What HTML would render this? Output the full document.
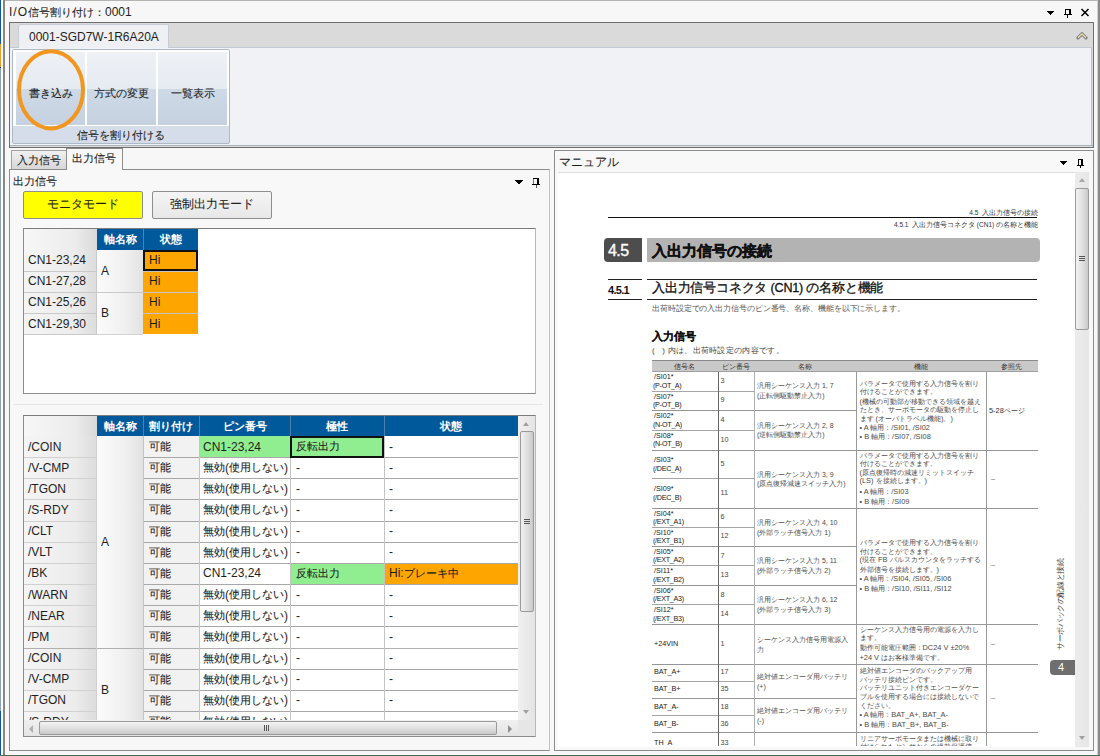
<!DOCTYPE html>
<html lang="ja"><head><meta charset="utf-8">
<style>
*{box-sizing:border-box;margin:0;padding:0}
html,body{width:1100px;height:756px;overflow:hidden;background:#f7f7f7;font-family:"Liberation Sans",sans-serif;font-size:12px;color:#1e1e1e}
.a{position:absolute}
.t{position:absolute;white-space:nowrap;line-height:1}
.c{position:absolute;white-space:nowrap;display:flex;align-items:center}
.rh{background:linear-gradient(90deg,#f5f5f5,#ececec 70%,#dcdcdc)}
.ax{background:linear-gradient(90deg,#fbfbfb,#f0f0f0 60%,#e2e2e2)}
.hg{background:linear-gradient(90deg,#f7f7f7,#ececec 70%,#d9d9d9)}
.j{font-size:0.917em;-webkit-text-stroke:0.1px currentColor}
.hd .j{-webkit-text-stroke:0}
.nj .j{font-size:1em}
.tt .j{font-size:0.96em}
.hb{background:#00599a}
.hd{justify-content:center;color:#fff;font-weight:bold}
</style></head><body>
<!-- window frame -->
<div class="a" style="left:3px;top:0;width:1097px;height:1px;background:#b4b4b4"></div>
<div class="a" style="left:0;top:0;width:1px;height:44px;background:#0b57a4"></div>
<div class="a" style="left:0;top:44px;width:1px;height:23px;background:#f59a23"></div>
<div class="a" style="left:0;top:67px;width:1px;height:1px;background:#1c2e4a"></div>
<div class="a" style="left:0;top:68px;width:1px;height:643px;background:#8aa0b8"></div>
<div class="a" style="left:0;top:711px;width:1px;height:45px;background:#0b57a4"></div>
<div class="a" style="left:1px;top:0;width:2px;height:756px;background:#fff"></div>
<div class="a" style="left:3px;top:0;width:2px;height:756px;background:#878787"></div>
<div class="a" style="left:1097px;top:0;width:1px;height:756px;background:#d0d0d0"></div>
<div class="a" style="left:1098px;top:0;width:2px;height:756px;background:#8a8a8a"></div>
<div class="a" style="left:0;top:755px;width:1100px;height:1px;background:#3f7350"></div>
<!-- title -->
<div class="t" style="left:9px;top:6px;font-size:12px"><span style="letter-spacing:1px">I/O</span><span class="j">信号割り付け：</span>0001</div>
<svg class="a" style="left:1047px;top:11px" width="7" height="4" shape-rendering="crispEdges" fill="#000"><rect x="0" y="0" width="7" height="1"/><rect x="1" y="1" width="5" height="1"/><rect x="2" y="2" width="3" height="1"/><rect x="3" y="3" width="1" height="1"/></svg>
<svg class="a" style="left:1064px;top:9px" width="8" height="9" shape-rendering="crispEdges" fill="#000"><path fill-rule="evenodd" d="M1 0H7V5H1ZM2 1V5H5V1Z"/><rect x="0" y="5" width="8" height="1"/><rect x="3" y="6" width="1" height="3"/></svg>
<svg class="a" style="left:1080px;top:8px" width="10" height="9"><path d="M1.5 1L8.5 8M8.5 1L1.5 8" stroke="#000" stroke-width="1.5"/></svg>

<!-- ribbon -->
<div class="a" style="left:9px;top:22px;width:1085px;height:126px;border:1px solid #6e6e6e;background:#dadada"></div>
<div class="a" style="left:10px;top:47px;width:1082px;height:98px;background:#f0f2f6;border-top:1px solid #c2cad6;border-right:1px solid #b8c2ce"></div>
<div class="a" style="left:10px;top:145px;width:1083px;height:1px;background:#a9b4c1"></div><div class="a" style="left:10px;top:146px;width:1083px;height:1px;background:#dcdcdc"></div>
<div class="a" style="left:18px;top:24px;width:151px;height:24px;background:#eef0f4;border:1px solid #c6ccd4;border-bottom:none;border-radius:3px 2px 0 0"></div>
<div class="t" style="left:29px;top:31px;font-size:12px">0001-SGD7W-1R6A20A</div>
<svg class="a" style="left:1076px;top:31px" width="12" height="9"><path d="M2 6.8L6 2.8L10 6.8" stroke="#7c7c7c" stroke-width="3.2" fill="none" stroke-linejoin="round" stroke-linecap="round"/><path d="M2 6.8L6 2.8L10 6.8" stroke="#f4e0b4" stroke-width="1.3" fill="none"/></svg>

<!-- group -->
<div class="a" style="left:12px;top:49px;width:218px;height:95px;border:1px solid #aeb9c8;border-radius:2px;background:#d4dde9"></div>
<div class="a" style="left:13px;top:50px;width:216px;height:76px;background:#fff"></div>
<div class="a" style="left:16px;top:52px;width:69px;height:73px;background:linear-gradient(#eef1f6,#e6ebf2 50%,#cfdae7 50.5%,#c5d1e0)"></div>
<div class="a" style="left:87px;top:52px;width:69px;height:73px;background:linear-gradient(#eef1f6,#e6ebf2 50%,#cfdae7 50.5%,#c5d1e0)"></div>
<div class="a" style="left:158px;top:52px;width:69px;height:73px;background:linear-gradient(#eef1f6,#e6ebf2 50%,#cfdae7 50.5%,#c5d1e0)"></div>
<div class="t" style="left:16px;top:86.5px;width:69px;text-align:center"><span class="j">書き込み</span></div>
<div class="t" style="left:87px;top:86.5px;width:69px;text-align:center"><span class="j">方式の変更</span></div>
<div class="t" style="left:158px;top:86.5px;width:69px;text-align:center"><span class="j">一覧表示</span></div>
<div class="t" style="left:13px;top:129px;width:216px;text-align:center"><span class="j">信号を割り付ける</span></div>
<svg class="a" style="left:15px;top:47px" width="74" height="86"><ellipse cx="36" cy="42.8" rx="32" ry="38.6" stroke="#f1961f" stroke-width="4" fill="none"/></svg>

<!-- left panel tabs -->
<div class="a" style="left:11px;top:150px;width:56px;height:20px;border:1px solid #a0a0a0;background:linear-gradient(#f0f0f0,#d6d6d6)"></div>
<div class="t" style="left:17px;top:154px"><span class="j">入力信号</span></div>
<div class="a" style="left:66px;top:148px;width:57px;height:22px;border:1px solid #8c8c8c;border-bottom:none;background:#f8f8f8;z-index:2"></div>
<div class="t" style="left:72px;top:152px;z-index:3"><span class="j">出力信号</span></div>
<!-- left panel -->
<div class="a" style="left:9px;top:169px;width:541px;height:582px;border:1px solid #8c8c8c;border-right-color:#c2c2c2;background:#f8f8f8"></div>
<div class="t" style="left:13px;top:175px"><span class="j">出力信号</span></div>
<svg class="a" style="left:515px;top:180px" width="8" height="4" shape-rendering="crispEdges" fill="#000"><rect x="0" y="0" width="8" height="1"/><rect x="1" y="1" width="6" height="1"/><rect x="2" y="2" width="4" height="1"/><rect x="3" y="3" width="2" height="1"/></svg>
<svg class="a" style="left:532px;top:178px" width="8" height="10" shape-rendering="crispEdges"><path fill-rule="evenodd" d="M1 0H7V6H1ZM2 1V6H5V1Z" fill="#000"/><rect x="1" y="1" width="1" height="5" fill="#777"/><rect x="0" y="6" width="8" height="1" fill="#000"/><rect x="4" y="7" width="1" height="3" fill="#555"/></svg>

<!-- buttons -->
<div class="a" style="left:23px;top:191px;width:120px;height:28px;border:1px solid #8e8e8e;border-radius:2px;background:#ffff00"></div>
<div class="t nj" style="left:23px;top:198px;width:120px;text-align:center"><span class="j">モニタモード</span></div>
<div class="a" style="left:152px;top:191px;width:120px;height:28px;border:1px solid #8e8e8e;border-radius:2px;background:linear-gradient(#f5f5f5,#e8e8e8)"></div>
<div class="t nj" style="left:152px;top:198px;width:120px;text-align:center"><span class="j">強制出力モード</span></div>

<!-- table1 box -->
<div class="a" style="left:23px;top:228px;width:513px;height:166px;border:1px solid #8c8c8c;border-right-color:#b8b8b8;border-top-color:#7c7c7c;background:#fff"></div>
<div class="a" style="left:13px;top:404px;width:530px;height:1px;background:#e6e6e6"></div>
<!-- table2 box -->
<div class="a" style="left:23px;top:415px;width:513px;height:322px;border:1px solid #8c8c8c;border-right-color:#b8b8b8;border-top-color:#7c7c7c;background:#fff"></div>

<!-- right panel -->
<div class="a" style="left:554px;top:150px;width:540px;height:601px;border:1px solid #8c8c8c;background:#f8f8f8"></div>
<div class="t nj" style="left:559px;top:156px;font-size:12px"><span class="j">マニュアル</span></div>
<svg class="a" style="left:1060px;top:161px" width="7" height="4" shape-rendering="crispEdges" fill="#000"><rect x="0" y="0" width="7" height="1"/><rect x="1" y="1" width="5" height="1"/><rect x="2" y="2" width="3" height="1"/><rect x="3" y="3" width="1" height="1"/></svg>
<svg class="a" style="left:1077px;top:159px" width="7" height="9" shape-rendering="crispEdges" fill="#000"><path fill-rule="evenodd" d="M1 0H6V6H1ZM2 1V6H4V1Z"/><rect x="0" y="6" width="7" height="1"/><rect x="3" y="7" width="1" height="2"/></svg>
<div class="a" style="left:558px;top:172px;width:517px;height:575px;background:#fff;border-top:1px solid #dcdcdc"></div>
<div class="a" style="left:1075px;top:172px;width:14px;height:575px;background:#e8e8e8"></div>


<div class="a hg" style="left:24px;top:229px;width:73px;height:20.5px"></div>
<div class="a hb" style="left:97px;top:229px;width:101px;height:20.5px"></div>
<div class="a" style="left:143px;top:229px;width:1px;height:20.5px;background:#4f7fb0"></div>
<div class="c hd" style="left:97px;top:229px;width:46px;height:20.5px"><span class="j">軸名称</span></div>
<div class="c hd" style="left:143px;top:229px;width:55px;height:20.5px"><span class="j">状態</span></div>
<div class="a rh" style="left:24px;top:249.5px;width:73px;height:21.19999999999999px"></div>
<div class="c" style="left:28px;top:249.5px;height:21.19999999999999px">CN1-23,24</div>
<div class="a" style="left:143px;top:249.5px;width:55px;height:21.19999999999999px;background:#ffa500;border-top:1px solid #c4c4c4"></div>
<div class="c" style="left:149px;top:249.5px;height:21.19999999999999px">Hi</div>
<div class="a rh" style="left:24px;top:270.7px;width:73px;height:21.19999999999999px"></div>
<div class="c" style="left:28px;top:270.7px;height:21.19999999999999px">CN1-27,28</div>
<div class="a" style="left:143px;top:270.7px;width:55px;height:21.19999999999999px;background:#ffa500;border-top:1px solid #c4c4c4"></div>
<div class="c" style="left:149px;top:270.7px;height:21.19999999999999px">Hi</div>
<div class="a rh" style="left:24px;top:291.9px;width:73px;height:21.200000000000045px"></div>
<div class="c" style="left:28px;top:291.9px;height:21.200000000000045px">CN1-25,26</div>
<div class="a" style="left:143px;top:291.9px;width:55px;height:21.200000000000045px;background:#ffa500;border-top:1px solid #c4c4c4"></div>
<div class="c" style="left:149px;top:291.9px;height:21.200000000000045px">Hi</div>
<div class="a rh" style="left:24px;top:313.1px;width:73px;height:21.19999999999999px"></div>
<div class="c" style="left:28px;top:313.1px;height:21.19999999999999px">CN1-29,30</div>
<div class="a" style="left:143px;top:313.1px;width:55px;height:21.19999999999999px;background:#ffa500;border-top:1px solid #c4c4c4"></div>
<div class="c" style="left:149px;top:313.1px;height:21.19999999999999px">Hi</div>
<div class="a ax" style="left:97px;top:249.5px;width:46px;height:42.39999999999998px"></div>
<div class="c" style="left:101px;top:249.5px;height:42.39999999999998px">A</div>
<div class="a ax" style="left:97px;top:291.9px;width:46px;height:42.400000000000034px"></div>
<div class="c" style="left:101px;top:291.9px;height:42.400000000000034px">B</div>
<div class="a" style="left:24px;top:270.7px;width:73px;height:1px;background:#c9c9c9"></div>
<div class="a" style="left:24px;top:291.9px;width:73px;height:1px;background:#c9c9c9"></div>
<div class="a" style="left:24px;top:313.1px;width:73px;height:1px;background:#c9c9c9"></div>
<div class="a" style="left:24px;top:334.3px;width:73px;height:1px;background:#c9c9c9"></div>
<div class="a" style="left:97px;top:334.3px;width:46px;height:1px;background:#d4d4d4"></div>
<div class="a" style="left:24px;top:291.9px;width:119px;height:1px;background:#c9c9c9"></div>
<div class="a" style="left:96px;top:249.5px;width:1px;height:84.80000000000001px;background:#c9c9c9"></div>
<div class="a" style="left:143px;top:249.5px;width:55px;height:21.2px;border:2px solid #111"></div>
<div class="a" style="left:24px;top:416px;width:494px;height:304px;overflow:hidden">
<div class="a hg" style="left:0;top:0;width:73px;height:20.0px"></div>
<div class="a hb" style="left:73px;top:0;width:421px;height:20.0px"></div>
<div class="a" style="left:119px;top:0;width:1px;height:20.0px;background:#4f7fb0"></div>
<div class="a" style="left:175px;top:0;width:1px;height:20.0px;background:#4f7fb0"></div>
<div class="a" style="left:266px;top:0;width:1px;height:20.0px;background:#4f7fb0"></div>
<div class="a" style="left:360px;top:0;width:1px;height:20.0px;background:#4f7fb0"></div>
<div class="c hd" style="left:73px;top:0;width:46px;height:20.0px"><span class="j">軸名称</span></div>
<div class="c hd" style="left:119px;top:0;width:56px;height:20.0px"><span class="j">割り付け</span></div>
<div class="c hd" style="left:175px;top:0;width:91px;height:20.0px"><span class="j">ピン番号</span></div>
<div class="c hd" style="left:266px;top:0;width:94px;height:20.0px"><span class="j">極性</span></div>
<div class="c hd" style="left:360px;top:0;width:134px;height:20.0px"><span class="j">状態</span></div>
<div class="a rh" style="left:0;top:20.0px;width:73px;height:21.15px"></div>
<div class="c" style="left:4px;top:20.0px;height:21.15px">/COIN</div>
<div class="a" style="left:119px;top:20.0px;width:56px;height:21.15px;background:#f2f2f2"></div>
<div class="c" style="left:125px;top:20.0px;height:21.15px"><span class="j">可能</span></div>
<div class="a" style="left:175px;top:20.0px;width:91px;height:21.15px;background:#90ee90"></div>
<div class="c" style="left:179px;top:20.0px;height:21.15px;width:87px;overflow:hidden">CN1-23,24</div>
<div class="a" style="left:266px;top:20.0px;width:94px;height:21.15px;background:#90ee90"></div>
<div class="c" style="left:272px;top:20.0px;height:21.15px"><span class="j">反転出力</span></div>
<div class="a" style="left:360px;top:20.0px;width:134px;height:21.15px;background:#fff"></div>
<div class="c" style="left:365px;top:20.0px;height:21.15px">-</div>
<div class="a rh" style="left:0;top:41.1px;width:73px;height:21.15px"></div>
<div class="c" style="left:4px;top:41.1px;height:21.15px">/V-CMP</div>
<div class="a" style="left:119px;top:41.1px;width:56px;height:21.15px;background:#f2f2f2"></div>
<div class="c" style="left:125px;top:41.1px;height:21.15px"><span class="j">可能</span></div>
<div class="a" style="left:175px;top:41.1px;width:91px;height:21.15px;background:#fff"></div>
<div class="c" style="left:179px;top:41.1px;height:21.15px;width:87px;overflow:hidden"><span class="j">無効</span>(<span class="j">使用しない</span>)</div>
<div class="a" style="left:266px;top:41.1px;width:94px;height:21.15px;background:#fff"></div>
<div class="c" style="left:272px;top:41.1px;height:21.15px">-</div>
<div class="a" style="left:360px;top:41.1px;width:134px;height:21.15px;background:#fff"></div>
<div class="c" style="left:365px;top:41.1px;height:21.15px">-</div>
<div class="a rh" style="left:0;top:62.3px;width:73px;height:21.15px"></div>
<div class="c" style="left:4px;top:62.3px;height:21.15px">/TGON</div>
<div class="a" style="left:119px;top:62.3px;width:56px;height:21.15px;background:#f2f2f2"></div>
<div class="c" style="left:125px;top:62.3px;height:21.15px"><span class="j">可能</span></div>
<div class="a" style="left:175px;top:62.3px;width:91px;height:21.15px;background:#fff"></div>
<div class="c" style="left:179px;top:62.3px;height:21.15px;width:87px;overflow:hidden"><span class="j">無効</span>(<span class="j">使用しない</span>)</div>
<div class="a" style="left:266px;top:62.3px;width:94px;height:21.15px;background:#fff"></div>
<div class="c" style="left:272px;top:62.3px;height:21.15px">-</div>
<div class="a" style="left:360px;top:62.3px;width:134px;height:21.15px;background:#fff"></div>
<div class="c" style="left:365px;top:62.3px;height:21.15px">-</div>
<div class="a rh" style="left:0;top:83.4px;width:73px;height:21.15px"></div>
<div class="c" style="left:4px;top:83.4px;height:21.15px">/S-RDY</div>
<div class="a" style="left:119px;top:83.4px;width:56px;height:21.15px;background:#f2f2f2"></div>
<div class="c" style="left:125px;top:83.4px;height:21.15px"><span class="j">可能</span></div>
<div class="a" style="left:175px;top:83.4px;width:91px;height:21.15px;background:#fff"></div>
<div class="c" style="left:179px;top:83.4px;height:21.15px;width:87px;overflow:hidden"><span class="j">無効</span>(<span class="j">使用しない</span>)</div>
<div class="a" style="left:266px;top:83.4px;width:94px;height:21.15px;background:#fff"></div>
<div class="c" style="left:272px;top:83.4px;height:21.15px">-</div>
<div class="a" style="left:360px;top:83.4px;width:134px;height:21.15px;background:#fff"></div>
<div class="c" style="left:365px;top:83.4px;height:21.15px">-</div>
<div class="a rh" style="left:0;top:104.6px;width:73px;height:21.15px"></div>
<div class="c" style="left:4px;top:104.6px;height:21.15px">/CLT</div>
<div class="a" style="left:119px;top:104.6px;width:56px;height:21.15px;background:#f2f2f2"></div>
<div class="c" style="left:125px;top:104.6px;height:21.15px"><span class="j">可能</span></div>
<div class="a" style="left:175px;top:104.6px;width:91px;height:21.15px;background:#fff"></div>
<div class="c" style="left:179px;top:104.6px;height:21.15px;width:87px;overflow:hidden"><span class="j">無効</span>(<span class="j">使用しない</span>)</div>
<div class="a" style="left:266px;top:104.6px;width:94px;height:21.15px;background:#fff"></div>
<div class="c" style="left:272px;top:104.6px;height:21.15px">-</div>
<div class="a" style="left:360px;top:104.6px;width:134px;height:21.15px;background:#fff"></div>
<div class="c" style="left:365px;top:104.6px;height:21.15px">-</div>
<div class="a rh" style="left:0;top:125.8px;width:73px;height:21.15px"></div>
<div class="c" style="left:4px;top:125.8px;height:21.15px">/VLT</div>
<div class="a" style="left:119px;top:125.8px;width:56px;height:21.15px;background:#f2f2f2"></div>
<div class="c" style="left:125px;top:125.8px;height:21.15px"><span class="j">可能</span></div>
<div class="a" style="left:175px;top:125.8px;width:91px;height:21.15px;background:#fff"></div>
<div class="c" style="left:179px;top:125.8px;height:21.15px;width:87px;overflow:hidden"><span class="j">無効</span>(<span class="j">使用しない</span>)</div>
<div class="a" style="left:266px;top:125.8px;width:94px;height:21.15px;background:#fff"></div>
<div class="c" style="left:272px;top:125.8px;height:21.15px">-</div>
<div class="a" style="left:360px;top:125.8px;width:134px;height:21.15px;background:#fff"></div>
<div class="c" style="left:365px;top:125.8px;height:21.15px">-</div>
<div class="a rh" style="left:0;top:146.9px;width:73px;height:21.15px"></div>
<div class="c" style="left:4px;top:146.9px;height:21.15px">/BK</div>
<div class="a" style="left:119px;top:146.9px;width:56px;height:21.15px;background:#f2f2f2"></div>
<div class="c" style="left:125px;top:146.9px;height:21.15px"><span class="j">可能</span></div>
<div class="a" style="left:175px;top:146.9px;width:91px;height:21.15px;background:#fff"></div>
<div class="c" style="left:179px;top:146.9px;height:21.15px;width:87px;overflow:hidden">CN1-23,24</div>
<div class="a" style="left:266px;top:146.9px;width:94px;height:21.15px;background:#90ee90"></div>
<div class="c" style="left:272px;top:146.9px;height:21.15px"><span class="j">反転出力</span></div>
<div class="a" style="left:360px;top:146.9px;width:134px;height:21.15px;background:#ffa500"></div>
<div class="c" style="left:365px;top:146.9px;height:21.15px">Hi:<span class="j">ブレーキ中</span></div>
<div class="a rh" style="left:0;top:168.0px;width:73px;height:21.15px"></div>
<div class="c" style="left:4px;top:168.0px;height:21.15px">/WARN</div>
<div class="a" style="left:119px;top:168.0px;width:56px;height:21.15px;background:#f2f2f2"></div>
<div class="c" style="left:125px;top:168.0px;height:21.15px"><span class="j">可能</span></div>
<div class="a" style="left:175px;top:168.0px;width:91px;height:21.15px;background:#fff"></div>
<div class="c" style="left:179px;top:168.0px;height:21.15px;width:87px;overflow:hidden"><span class="j">無効</span>(<span class="j">使用しない</span>)</div>
<div class="a" style="left:266px;top:168.0px;width:94px;height:21.15px;background:#fff"></div>
<div class="c" style="left:272px;top:168.0px;height:21.15px">-</div>
<div class="a" style="left:360px;top:168.0px;width:134px;height:21.15px;background:#fff"></div>
<div class="c" style="left:365px;top:168.0px;height:21.15px">-</div>
<div class="a rh" style="left:0;top:189.2px;width:73px;height:21.15px"></div>
<div class="c" style="left:4px;top:189.2px;height:21.15px">/NEAR</div>
<div class="a" style="left:119px;top:189.2px;width:56px;height:21.15px;background:#f2f2f2"></div>
<div class="c" style="left:125px;top:189.2px;height:21.15px"><span class="j">可能</span></div>
<div class="a" style="left:175px;top:189.2px;width:91px;height:21.15px;background:#fff"></div>
<div class="c" style="left:179px;top:189.2px;height:21.15px;width:87px;overflow:hidden"><span class="j">無効</span>(<span class="j">使用しない</span>)</div>
<div class="a" style="left:266px;top:189.2px;width:94px;height:21.15px;background:#fff"></div>
<div class="c" style="left:272px;top:189.2px;height:21.15px">-</div>
<div class="a" style="left:360px;top:189.2px;width:134px;height:21.15px;background:#fff"></div>
<div class="c" style="left:365px;top:189.2px;height:21.15px">-</div>
<div class="a rh" style="left:0;top:210.4px;width:73px;height:21.15px"></div>
<div class="c" style="left:4px;top:210.4px;height:21.15px">/PM</div>
<div class="a" style="left:119px;top:210.4px;width:56px;height:21.15px;background:#f2f2f2"></div>
<div class="c" style="left:125px;top:210.4px;height:21.15px"><span class="j">可能</span></div>
<div class="a" style="left:175px;top:210.4px;width:91px;height:21.15px;background:#fff"></div>
<div class="c" style="left:179px;top:210.4px;height:21.15px;width:87px;overflow:hidden"><span class="j">無効</span>(<span class="j">使用しない</span>)</div>
<div class="a" style="left:266px;top:210.4px;width:94px;height:21.15px;background:#fff"></div>
<div class="c" style="left:272px;top:210.4px;height:21.15px">-</div>
<div class="a" style="left:360px;top:210.4px;width:134px;height:21.15px;background:#fff"></div>
<div class="c" style="left:365px;top:210.4px;height:21.15px">-</div>
<div class="a rh" style="left:0;top:231.5px;width:73px;height:21.15px"></div>
<div class="c" style="left:4px;top:231.5px;height:21.15px">/COIN</div>
<div class="a" style="left:119px;top:231.5px;width:56px;height:21.15px;background:#f2f2f2"></div>
<div class="c" style="left:125px;top:231.5px;height:21.15px"><span class="j">可能</span></div>
<div class="a" style="left:175px;top:231.5px;width:91px;height:21.15px;background:#fff"></div>
<div class="c" style="left:179px;top:231.5px;height:21.15px;width:87px;overflow:hidden"><span class="j">無効</span>(<span class="j">使用しない</span>)</div>
<div class="a" style="left:266px;top:231.5px;width:94px;height:21.15px;background:#fff"></div>
<div class="c" style="left:272px;top:231.5px;height:21.15px">-</div>
<div class="a" style="left:360px;top:231.5px;width:134px;height:21.15px;background:#fff"></div>
<div class="c" style="left:365px;top:231.5px;height:21.15px">-</div>
<div class="a rh" style="left:0;top:252.6px;width:73px;height:21.15px"></div>
<div class="c" style="left:4px;top:252.6px;height:21.15px">/V-CMP</div>
<div class="a" style="left:119px;top:252.6px;width:56px;height:21.15px;background:#f2f2f2"></div>
<div class="c" style="left:125px;top:252.6px;height:21.15px"><span class="j">可能</span></div>
<div class="a" style="left:175px;top:252.6px;width:91px;height:21.15px;background:#fff"></div>
<div class="c" style="left:179px;top:252.6px;height:21.15px;width:87px;overflow:hidden"><span class="j">無効</span>(<span class="j">使用しない</span>)</div>
<div class="a" style="left:266px;top:252.6px;width:94px;height:21.15px;background:#fff"></div>
<div class="c" style="left:272px;top:252.6px;height:21.15px">-</div>
<div class="a" style="left:360px;top:252.6px;width:134px;height:21.15px;background:#fff"></div>
<div class="c" style="left:365px;top:252.6px;height:21.15px">-</div>
<div class="a rh" style="left:0;top:273.8px;width:73px;height:21.15px"></div>
<div class="c" style="left:4px;top:273.8px;height:21.15px">/TGON</div>
<div class="a" style="left:119px;top:273.8px;width:56px;height:21.15px;background:#f2f2f2"></div>
<div class="c" style="left:125px;top:273.8px;height:21.15px"><span class="j">可能</span></div>
<div class="a" style="left:175px;top:273.8px;width:91px;height:21.15px;background:#fff"></div>
<div class="c" style="left:179px;top:273.8px;height:21.15px;width:87px;overflow:hidden"><span class="j">無効</span>(<span class="j">使用しない</span>)</div>
<div class="a" style="left:266px;top:273.8px;width:94px;height:21.15px;background:#fff"></div>
<div class="c" style="left:272px;top:273.8px;height:21.15px">-</div>
<div class="a" style="left:360px;top:273.8px;width:134px;height:21.15px;background:#fff"></div>
<div class="c" style="left:365px;top:273.8px;height:21.15px">-</div>
<div class="a rh" style="left:0;top:295.0px;width:73px;height:21.15px"></div>
<div class="c" style="left:4px;top:295.0px;height:21.15px">/S-RDY</div>
<div class="a" style="left:119px;top:295.0px;width:56px;height:21.15px;background:#f2f2f2"></div>
<div class="c" style="left:125px;top:295.0px;height:21.15px"><span class="j">可能</span></div>
<div class="a" style="left:175px;top:295.0px;width:91px;height:21.15px;background:#fff"></div>
<div class="c" style="left:179px;top:295.0px;height:21.15px;width:87px;overflow:hidden"><span class="j">無効</span>(<span class="j">使用しない</span>)</div>
<div class="a" style="left:266px;top:295.0px;width:94px;height:21.15px;background:#fff"></div>
<div class="c" style="left:272px;top:295.0px;height:21.15px">-</div>
<div class="a" style="left:360px;top:295.0px;width:134px;height:21.15px;background:#fff"></div>
<div class="c" style="left:365px;top:295.0px;height:21.15px">-</div>
<div class="a ax" style="left:73px;top:20.0px;width:46px;height:211.5px"></div>
<div class="c" style="left:77px;top:20.0px;height:211.5px">A</div>
<div class="a ax" style="left:73px;top:231.5px;width:46px;height:105.8px"></div>
<div class="c" style="left:77px;top:231.5px;height:84.6px">B</div>
<div class="a" style="left:0;top:41.1px;width:73px;height:1px;background:#d0d0d0"></div>
<div class="a" style="left:119px;top:41.1px;width:375px;height:1px;background:#a8a8a8"></div>
<div class="a" style="left:0;top:62.3px;width:73px;height:1px;background:#d0d0d0"></div>
<div class="a" style="left:119px;top:62.3px;width:375px;height:1px;background:#a8a8a8"></div>
<div class="a" style="left:0;top:83.4px;width:73px;height:1px;background:#d0d0d0"></div>
<div class="a" style="left:119px;top:83.4px;width:375px;height:1px;background:#a8a8a8"></div>
<div class="a" style="left:0;top:104.6px;width:73px;height:1px;background:#d0d0d0"></div>
<div class="a" style="left:119px;top:104.6px;width:375px;height:1px;background:#a8a8a8"></div>
<div class="a" style="left:0;top:125.8px;width:73px;height:1px;background:#d0d0d0"></div>
<div class="a" style="left:119px;top:125.8px;width:375px;height:1px;background:#a8a8a8"></div>
<div class="a" style="left:0;top:146.9px;width:73px;height:1px;background:#d0d0d0"></div>
<div class="a" style="left:119px;top:146.9px;width:375px;height:1px;background:#a8a8a8"></div>
<div class="a" style="left:0;top:168.0px;width:73px;height:1px;background:#d0d0d0"></div>
<div class="a" style="left:119px;top:168.0px;width:375px;height:1px;background:#a8a8a8"></div>
<div class="a" style="left:0;top:189.2px;width:73px;height:1px;background:#d0d0d0"></div>
<div class="a" style="left:119px;top:189.2px;width:375px;height:1px;background:#a8a8a8"></div>
<div class="a" style="left:0;top:210.4px;width:73px;height:1px;background:#d0d0d0"></div>
<div class="a" style="left:119px;top:210.4px;width:375px;height:1px;background:#a8a8a8"></div>
<div class="a" style="left:0;top:231.5px;width:494px;height:1px;background:#b0b0b0"></div>
<div class="a" style="left:0;top:252.6px;width:73px;height:1px;background:#d0d0d0"></div>
<div class="a" style="left:119px;top:252.6px;width:375px;height:1px;background:#a8a8a8"></div>
<div class="a" style="left:0;top:273.8px;width:73px;height:1px;background:#d0d0d0"></div>
<div class="a" style="left:119px;top:273.8px;width:375px;height:1px;background:#a8a8a8"></div>
<div class="a" style="left:0;top:295.0px;width:73px;height:1px;background:#d0d0d0"></div>
<div class="a" style="left:119px;top:295.0px;width:375px;height:1px;background:#a8a8a8"></div>
<div class="a" style="left:72px;top:20.0px;width:1px;height:300px;background:#d0d0d0"></div>
<div class="a" style="left:119px;top:20.0px;width:1px;height:300px;background:#c4c4c4"></div>
<div class="a" style="left:174.5px;top:20.0px;width:1px;height:300px;background:#c4c4c4"></div>
<div class="a" style="left:266px;top:20.0px;width:1px;height:300px;background:#c4c4c4"></div>
<div class="a" style="left:360px;top:20.0px;width:1px;height:300px;background:#c4c4c4"></div>
<div class="a" style="left:266px;top:20.0px;width:94px;height:21.6px;border:2px solid #111"></div>
</div>
<div class="a" style="left:518px;top:416px;width:17px;height:304px;background:linear-gradient(90deg,#f0f0f0,#e4e4e4)"></div>
<svg class="a" style="left:521px;top:420px" width="10" height="8"><path d="M5 2L8 6H2Z" fill="#a0a0a0"/></svg>
<div class="a" style="left:520px;top:431px;width:14px;height:181px;border:1px solid #9a9a9a;border-radius:2px;background:linear-gradient(90deg,#f0f0f0,#dcdcdc 60%,#c8c8c8)"></div>
<svg class="a" style="left:523px;top:518px" width="8" height="8" shape-rendering="crispEdges"><path d="M1 1.5H7M1 3.5H7M1 5.5H7" stroke="#555" stroke-width="1"/></svg>
<svg class="a" style="left:521px;top:708px" width="10" height="8"><path d="M2 2H8L5 6Z" fill="#a0a0a0"/></svg>
<div class="a" style="left:24px;top:720px;width:511px;height:16px;background:linear-gradient(#f0f0f0,#e4e4e4)"></div>
<svg class="a" style="left:27px;top:724px" width="8" height="10"><path d="M6 1V9L2 5Z" fill="#b0b0b0"/></svg>
<div class="a" style="left:39px;top:721px;width:458px;height:14px;border:1px solid #9a9a9a;border-radius:2px;background:linear-gradient(#f4f4f4,#dcdcdc 60%,#c8c8c8)"></div>
<svg class="a" style="left:263px;top:724px" width="8" height="8" shape-rendering="crispEdges"><path d="M1.5 1V7M3.5 1V7M5.5 1V7" stroke="#555" stroke-width="1"/></svg>
<svg class="a" style="left:506px;top:724px" width="8" height="10"><path d="M2 1V9L6 5Z" fill="#909090"/></svg>
<div class="a" style="left:518px;top:720px;width:17px;height:16px;background:#e6e6e6"></div>
<div class="a" style="left:1075px;top:173px;width:14px;height:573px;background:linear-gradient(90deg,#ececec,#e6e6e6)"></div>
<svg class="a" style="left:1077px;top:176px" width="10" height="8"><path d="M5 2L8 6H2Z" fill="#a8a8a8"/></svg>
<div class="a" style="left:1075px;top:188px;width:14px;height:142px;border:1px solid #9a9a9a;border-radius:2px;background:linear-gradient(90deg,#f2f2f2,#dedede 60%,#c9c9c9)"></div>
<svg class="a" style="left:1078px;top:255px" width="8" height="8" shape-rendering="crispEdges"><path d="M1 1.5H7M1 3.5H7M1 5.5H7" stroke="#555" stroke-width="1"/></svg>
<svg class="a" style="left:1077px;top:734px" width="10" height="8"><path d="M2 2H8L5 6Z" fill="#a0a0a0"/></svg>
<div class="t" style="left:838px;top:210px;width:200px;text-align:right;font-size:6.5px;color:#333">4.5&nbsp; 入出力信号の接続</div>
<div class="a" style="left:608px;top:216.5px;width:429px;height:1.5px;background:#111"></div>
<div class="t" style="left:738px;top:221.5px;width:300px;text-align:right;font-size:6.5px;color:#333">4.5.1&nbsp; 入出力信号コネクタ (CN1) の名称と機能</div>
<div class="a" style="left:604px;top:238px;width:38px;height:24px;background:#4d4d4d;border-radius:4px 0 0 4px"></div>
<div class="t" style="left:608px;top:243px;font-size:16px;color:#fff;letter-spacing:-0.6px;-webkit-text-stroke:0.35px #fff">4.5</div>
<div class="a" style="left:647px;top:238px;width:393px;height:24px;background:#b3b3b3;border-radius:0 4px 4px 0"></div>
<div class="t" style="left:652px;top:243px;font-size:15px;font-weight:bold;color:#111;-webkit-text-stroke:0.4px #111">入出力信号の接続</div>
<div class="a" style="left:608px;top:278.5px;width:34px;height:1.5px;background:#222"></div>
<div class="a" style="left:647px;top:278.5px;width:390px;height:1.5px;background:#222"></div>
<div class="a" style="left:608px;top:298.5px;width:34px;height:1.5px;background:#222"></div>
<div class="a" style="left:647px;top:298.5px;width:390px;height:1.5px;background:#222"></div>
<div class="t" style="left:608px;top:285px;font-size:11px;font-weight:bold;color:#111;letter-spacing:-0.7px">4.5.1</div>
<div class="t" style="left:652px;top:282px;font-size:12.6px;color:#111;letter-spacing:-0.2px;-webkit-text-stroke:0.3px #111">入出力信号コネクタ (CN1) の名称と機能</div>
<div class="t" style="left:652px;top:305px;font-size:7.6px;color:#555;letter-spacing:-0.1px">出荷時設定での入出力信号のピン番号、名称、機能を以下に示します。</div>
<div class="t" style="left:652px;top:331px;font-size:11.2px;font-weight:bold;color:#111;-webkit-text-stroke:0.2px #111">入力信号</div>
<div class="t" style="left:652px;top:347px;font-size:7.8px;color:#444;letter-spacing:0.3px">(&nbsp;&nbsp; )&nbsp;内は、出荷時設定の内容です。</div>
<div class="a" style="left:651.5px;top:360.3px;width:386.0px;height:11.300000000000011px;background:#c9c9c9;border-top:1px solid #8a8a8a;border-bottom:1px solid #a0a0a0"></div>
<div class="t" style="left:651.5px;top:362.8px;width:66.0px;text-align:center;font-size:7px;color:#333">信号名</div>
<div class="t" style="left:717.5px;top:362.8px;width:36.0px;text-align:center;font-size:7px;color:#333">ピン番号</div>
<div class="t" style="left:753.5px;top:362.8px;width:102.0px;text-align:center;font-size:7px;color:#333">名称</div>
<div class="t" style="left:855.5px;top:362.8px;width:130.0px;text-align:center;font-size:7px;color:#333">機能</div>
<div class="t" style="left:985.5px;top:362.8px;width:52.0px;text-align:center;font-size:7px;color:#333">参照先</div>
<div class="a" style="left:558px;top:173px;width:517px;height:573px;overflow:hidden">
<div class="t" style="left:96.0px;top:200.2px;font-size:7.2px;color:#222;">/SI01*</div>
<div class="t" style="left:95.0px;top:208.8px;font-size:7.2px;color:#222;letter-spacing:-0.3px">(P-OT_A)</div>
<div class="t" style="left:162.5px;top:203.9px;font-size:7.2px;color:#444;">3</div>
<div class="t" style="left:96.0px;top:219.5px;font-size:7.2px;color:#222;">/SI07*</div>
<div class="t" style="left:95.0px;top:228.1px;font-size:7.2px;color:#222;letter-spacing:-0.3px">(P-OT_B)</div>
<div class="t" style="left:162.5px;top:223.2px;font-size:7.2px;color:#444;">9</div>
<div class="t" style="left:96.0px;top:238.9px;font-size:7.2px;color:#222;">/SI02*</div>
<div class="t" style="left:95.0px;top:247.5px;font-size:7.2px;color:#222;letter-spacing:-0.3px">(N-OT_A)</div>
<div class="t" style="left:162.5px;top:242.6px;font-size:7.2px;color:#444;">4</div>
<div class="t" style="left:96.0px;top:258.8px;font-size:7.2px;color:#222;">/SI08*</div>
<div class="t" style="left:95.0px;top:267.4px;font-size:7.2px;color:#222;letter-spacing:-0.3px">(N-OT_B)</div>
<div class="t" style="left:162.5px;top:262.5px;font-size:7.2px;color:#444;">10</div>
<div class="t" style="left:96.0px;top:283.1px;font-size:7.2px;color:#222;">/SI03*</div>
<div class="t" style="left:95.0px;top:291.6px;font-size:7.2px;color:#222;letter-spacing:-0.3px">(/DEC_A)</div>
<div class="t" style="left:162.5px;top:286.8px;font-size:7.2px;color:#444;">5</div>
<div class="t" style="left:96.0px;top:312.2px;font-size:7.2px;color:#222;">/SI09*</div>
<div class="t" style="left:95.0px;top:320.8px;font-size:7.2px;color:#222;letter-spacing:-0.3px">(/DEC_B)</div>
<div class="t" style="left:162.5px;top:315.9px;font-size:7.2px;color:#444;">11</div>
<div class="t" style="left:96.0px;top:336.5px;font-size:7.2px;color:#222;">/SI04*</div>
<div class="t" style="left:95.0px;top:345.1px;font-size:7.2px;color:#222;letter-spacing:-0.3px">(/EXT_A1)</div>
<div class="t" style="left:162.5px;top:340.2px;font-size:7.2px;color:#444;">6</div>
<div class="t" style="left:96.0px;top:355.6px;font-size:7.2px;color:#222;">/SI10*</div>
<div class="t" style="left:95.0px;top:364.2px;font-size:7.2px;color:#222;letter-spacing:-0.3px">(/EXT_B1)</div>
<div class="t" style="left:162.5px;top:359.4px;font-size:7.2px;color:#444;">12</div>
<div class="t" style="left:96.0px;top:374.8px;font-size:7.2px;color:#222;">/SI05*</div>
<div class="t" style="left:95.0px;top:383.4px;font-size:7.2px;color:#222;letter-spacing:-0.3px">(/EXT_A2)</div>
<div class="t" style="left:162.5px;top:378.5px;font-size:7.2px;color:#444;">7</div>
<div class="t" style="left:96.0px;top:394.2px;font-size:7.2px;color:#222;">/SI11*</div>
<div class="t" style="left:95.0px;top:402.8px;font-size:7.2px;color:#222;letter-spacing:-0.3px">(/EXT_B2)</div>
<div class="t" style="left:162.5px;top:397.9px;font-size:7.2px;color:#444;">13</div>
<div class="t" style="left:96.0px;top:413.8px;font-size:7.2px;color:#222;">/SI06*</div>
<div class="t" style="left:95.0px;top:422.4px;font-size:7.2px;color:#222;letter-spacing:-0.3px">(/EXT_A3)</div>
<div class="t" style="left:162.5px;top:417.5px;font-size:7.2px;color:#444;">8</div>
<div class="t" style="left:96.0px;top:433.3px;font-size:7.2px;color:#222;">/SI12*</div>
<div class="t" style="left:95.0px;top:441.9px;font-size:7.2px;color:#222;letter-spacing:-0.3px">(/EXT_B3)</div>
<div class="t" style="left:162.5px;top:437.0px;font-size:7.2px;color:#444;">14</div>
<div class="t" style="left:96.0px;top:467.0px;font-size:7.2px;color:#222;">+24VIN</div>
<div class="t" style="left:162.5px;top:467.0px;font-size:7.2px;color:#444;">1</div>
<div class="t" style="left:96.0px;top:495.4px;font-size:7.2px;color:#222;">BAT_A+</div>
<div class="t" style="left:162.5px;top:495.4px;font-size:7.2px;color:#444;">17</div>
<div class="t" style="left:96.0px;top:512.4px;font-size:7.2px;color:#222;">BAT_B+</div>
<div class="t" style="left:162.5px;top:512.4px;font-size:7.2px;color:#444;">35</div>
<div class="t" style="left:96.0px;top:529.5px;font-size:7.2px;color:#222;">BAT_A-</div>
<div class="t" style="left:162.5px;top:529.5px;font-size:7.2px;color:#444;">18</div>
<div class="t" style="left:96.0px;top:546.5px;font-size:7.2px;color:#222;">BAT_B-</div>
<div class="t" style="left:162.5px;top:546.5px;font-size:7.2px;color:#444;">36</div>
<div class="t" style="left:96.0px;top:565.5px;font-size:7.2px;color:#222;">TH_A</div>
<div class="t" style="left:162.5px;top:565.5px;font-size:7.2px;color:#444;">33</div>
<div class="a" style="left:93.5px;top:217.7px;width:102.0px;height:1.0px;background:#a5a5a5"></div>
<div class="a" style="left:93.5px;top:236.7px;width:204.0px;height:1.0px;background:#959595"></div>
<div class="a" style="left:93.5px;top:256.5px;width:102.0px;height:1.0px;background:#a5a5a5"></div>
<div class="a" style="left:93.5px;top:276.5px;width:386.0px;height:1.0px;background:#959595"></div>
<div class="a" style="left:93.5px;top:305.0px;width:102.0px;height:1.0px;background:#a5a5a5"></div>
<div class="a" style="left:93.5px;top:334.7px;width:386.0px;height:1.0px;background:#959595"></div>
<div class="a" style="left:93.5px;top:353.7px;width:102.0px;height:1.0px;background:#a5a5a5"></div>
<div class="a" style="left:93.5px;top:373.0px;width:204.0px;height:1.0px;background:#959595"></div>
<div class="a" style="left:93.5px;top:392.0px;width:102.0px;height:1.0px;background:#a5a5a5"></div>
<div class="a" style="left:93.5px;top:411.8px;width:204.0px;height:1.0px;background:#959595"></div>
<div class="a" style="left:93.5px;top:431.3px;width:102.0px;height:1.0px;background:#a5a5a5"></div>
<div class="a" style="left:93.5px;top:450.8px;width:386.0px;height:1.0px;background:#959595"></div>
<div class="a" style="left:93.5px;top:491.1px;width:386.0px;height:1.0px;background:#959595"></div>
<div class="a" style="left:93.5px;top:507.7px;width:102.0px;height:1.0px;background:#a5a5a5"></div>
<div class="a" style="left:93.5px;top:525.0px;width:204.0px;height:1.0px;background:#959595"></div>
<div class="a" style="left:93.5px;top:542.0px;width:102.0px;height:1.0px;background:#a5a5a5"></div>
<div class="a" style="left:93.5px;top:559.1px;width:386.0px;height:1.0px;background:#959595"></div>
<div class="t" style="left:199.0px;top:209.4px;font-size:7px;color:#4a4a4a;">汎用シーケンス入力 1, 7</div>
<div class="t" style="left:199.0px;top:219.1px;font-size:7px;color:#4a4a4a;">(正転側駆動禁止入力)</div>
<div class="t" style="left:199.0px;top:248.6px;font-size:7px;color:#4a4a4a;">汎用シーケンス入力 2, 8</div>
<div class="t" style="left:199.0px;top:258.3px;font-size:7px;color:#4a4a4a;">(逆転側駆動禁止入力)</div>
<div class="t" style="left:199.0px;top:297.6px;font-size:7px;color:#4a4a4a;">汎用シーケンス入力 3, 9</div>
<div class="t" style="left:199.0px;top:307.3px;font-size:7px;color:#4a4a4a;">(原点復帰減速スイッチ入力)</div>
<div class="t" style="left:199.0px;top:345.9px;font-size:7px;color:#4a4a4a;">汎用シーケンス入力 4, 10</div>
<div class="t" style="left:199.0px;top:355.6px;font-size:7px;color:#4a4a4a;">(外部ラッチ信号入力 1)</div>
<div class="t" style="left:199.0px;top:384.4px;font-size:7px;color:#4a4a4a;">汎用シーケンス入力 5, 11</div>
<div class="t" style="left:199.0px;top:394.1px;font-size:7px;color:#4a4a4a;">(外部ラッチ信号入力 2)</div>
<div class="t" style="left:199.0px;top:423.3px;font-size:7px;color:#4a4a4a;">汎用シーケンス入力 6, 12</div>
<div class="t" style="left:199.0px;top:433.0px;font-size:7px;color:#4a4a4a;">(外部ラッチ信号入力 3)</div>
<div class="t" style="left:199.0px;top:463.0px;font-size:7px;color:#4a4a4a;">シーケンス入力信号用電源入</div>
<div class="t" style="left:199.0px;top:472.7px;font-size:7px;color:#4a4a4a;">力</div>
<div class="t" style="left:199.0px;top:500.0px;font-size:7px;color:#4a4a4a;">絶対値エンコーダ用バッテリ</div>
<div class="t" style="left:199.0px;top:509.8px;font-size:7px;color:#4a4a4a;">(+)</div>
<div class="t" style="left:199.0px;top:534.0px;font-size:7px;color:#4a4a4a;">絶対値エンコーダ用バッテリ</div>
<div class="t" style="left:199.0px;top:543.8px;font-size:7px;color:#4a4a4a;">(-)</div>
<div class="t" style="left:301.5px;top:207.0px;font-size:7.4px;color:#4a4a4a;">パラメータで使用する入力信号を割り</div>
<div class="t" style="left:301.5px;top:215.0px;font-size:7.4px;color:#4a4a4a;">付けることができます。</div>
<div class="t" style="left:301.5px;top:224.7px;font-size:7.4px;color:#4a4a4a;">(機械の可動部が移動できる領域を越え</div>
<div class="t" style="left:301.5px;top:233.0px;font-size:7.4px;color:#4a4a4a;">たとき、サーボモータの駆動を停止し</div>
<div class="t" style="left:301.5px;top:241.7px;font-size:7.4px;color:#4a4a4a;">ます (オーバトラベル機能)。)</div>
<div class="t" style="left:301.5px;top:250.7px;font-size:7.4px;color:#4a4a4a;">• A 軸用：/SI01, /SI02</div>
<div class="t" style="left:301.5px;top:260.2px;font-size:7.4px;color:#4a4a4a;">• B 軸用：/SI07, /SI08</div>
<div class="t" style="left:301.5px;top:279.4px;font-size:7.4px;color:#4a4a4a;">パラメータで使用する入力信号を割り</div>
<div class="t" style="left:301.5px;top:286.8px;font-size:7.4px;color:#4a4a4a;">付けることができます。</div>
<div class="t" style="left:301.5px;top:296.2px;font-size:7.4px;color:#4a4a4a;">(原点復帰時の減速リミットスイッチ</div>
<div class="t" style="left:301.5px;top:304.2px;font-size:7.4px;color:#4a4a4a;">(LS) を接続します。)</div>
<div class="t" style="left:301.5px;top:315.2px;font-size:7.4px;color:#4a4a4a;">• A 軸用：/SI03</div>
<div class="t" style="left:301.5px;top:325.1px;font-size:7.4px;color:#4a4a4a;">• B 軸用：/SI09</div>
<div class="t" style="left:301.5px;top:365.5px;font-size:7.4px;color:#4a4a4a;">パラメータで使用する入力信号を割り</div>
<div class="t" style="left:301.5px;top:374.5px;font-size:7.4px;color:#4a4a4a;">付けることができます。</div>
<div class="t" style="left:301.5px;top:383.2px;font-size:7.4px;color:#4a4a4a;">(現在 FB パルスカウンタをラッチする</div>
<div class="t" style="left:301.5px;top:392.6px;font-size:7.4px;color:#4a4a4a;">外部信号を接続します。)</div>
<div class="t" style="left:301.5px;top:401.8px;font-size:7.4px;color:#4a4a4a;">• A 軸用：/SI04, /SI05, /SI06</div>
<div class="t" style="left:301.5px;top:411.8px;font-size:7.4px;color:#4a4a4a;">• B 軸用：/SI10, /SI11, /SI12</div>
<div class="t" style="left:301.5px;top:452.9px;font-size:7.4px;color:#4a4a4a;">シーケンス入力信号用の電源を入力し</div>
<div class="t" style="left:301.5px;top:461.4px;font-size:7.4px;color:#4a4a4a;">ます。</div>
<div class="t" style="left:301.5px;top:471.2px;font-size:7.4px;color:#4a4a4a;">動作可能電圧範囲：DC24 V ±20%</div>
<div class="t" style="left:301.5px;top:480.5px;font-size:7.4px;color:#4a4a4a;">+24 V はお客様準備です。</div>
<div class="t" style="left:301.5px;top:494.2px;font-size:7.4px;color:#4a4a4a;">絶対値エンコーダのバックアップ用</div>
<div class="t" style="left:301.5px;top:502.7px;font-size:7.4px;color:#4a4a4a;">バッテリ接続ピンです。</div>
<div class="t" style="left:301.5px;top:511.2px;font-size:7.4px;color:#4a4a4a;">バッテリユニット付きエンコーダケー</div>
<div class="t" style="left:301.5px;top:520.2px;font-size:7.4px;color:#4a4a4a;">ブルを使用する場合には接続しないで</div>
<div class="t" style="left:301.5px;top:528.8px;font-size:7.4px;color:#4a4a4a;">ください。</div>
<div class="t" style="left:301.5px;top:538.2px;font-size:7.4px;color:#4a4a4a;">• A 軸用：BAT_A+, BAT_A-</div>
<div class="t" style="left:301.5px;top:547.8px;font-size:7.4px;color:#4a4a4a;">• B 軸用：BAT_B+, BAT_B-</div>
<div class="t" style="left:301.5px;top:562.0px;font-size:7.4px;color:#4a4a4a;">リニアサーボモータまたは機械に取り</div>
<div class="t" style="left:301.5px;top:570.2px;font-size:7.4px;color:#4a4a4a;">付けられたセンサからの過熱保護信</div>
<div class="t" style="left:431.0px;top:233.8px;font-size:7.4px;color:#333;">5-28ページ</div>
<div class="t" style="left:433.0px;top:301.8px;font-size:7.4px;color:#666;">–</div>
<div class="t" style="left:433.0px;top:388.2px;font-size:7.4px;color:#666;">–</div>
<div class="t" style="left:433.0px;top:467.2px;font-size:7.4px;color:#666;">–</div>
<div class="t" style="left:433.0px;top:521.2px;font-size:7.4px;color:#666;">–</div>
<div class="a" style="left:159.5px;top:198.6px;width:1.0px;height:374.4px;background:#666"></div>
<div class="a" style="left:195.5px;top:198.6px;width:1.0px;height:374.4px;background:#b0b0b0"></div>
<div class="a" style="left:297.5px;top:198.6px;width:1.0px;height:374.4px;background:#999"></div>
<div class="a" style="left:427.5px;top:198.6px;width:1.0px;height:374.4px;background:#999"></div>
</div>
<div class="t" style="left:1016px;top:600.5px;width:90px;font-size:7.5px;color:#444;letter-spacing:-0.4px;transform:rotate(-90deg);text-align:center">サーボパックの配線と接続</div>
<div class="a" style="left:1049.5px;top:660px;width:25px;height:15px;background:#6e6e6e;border-radius:4px 0 0 4px"></div>
<div class="t" style="left:1058px;top:662px;font-size:11px;color:#fff">4</div>
</body></html>
